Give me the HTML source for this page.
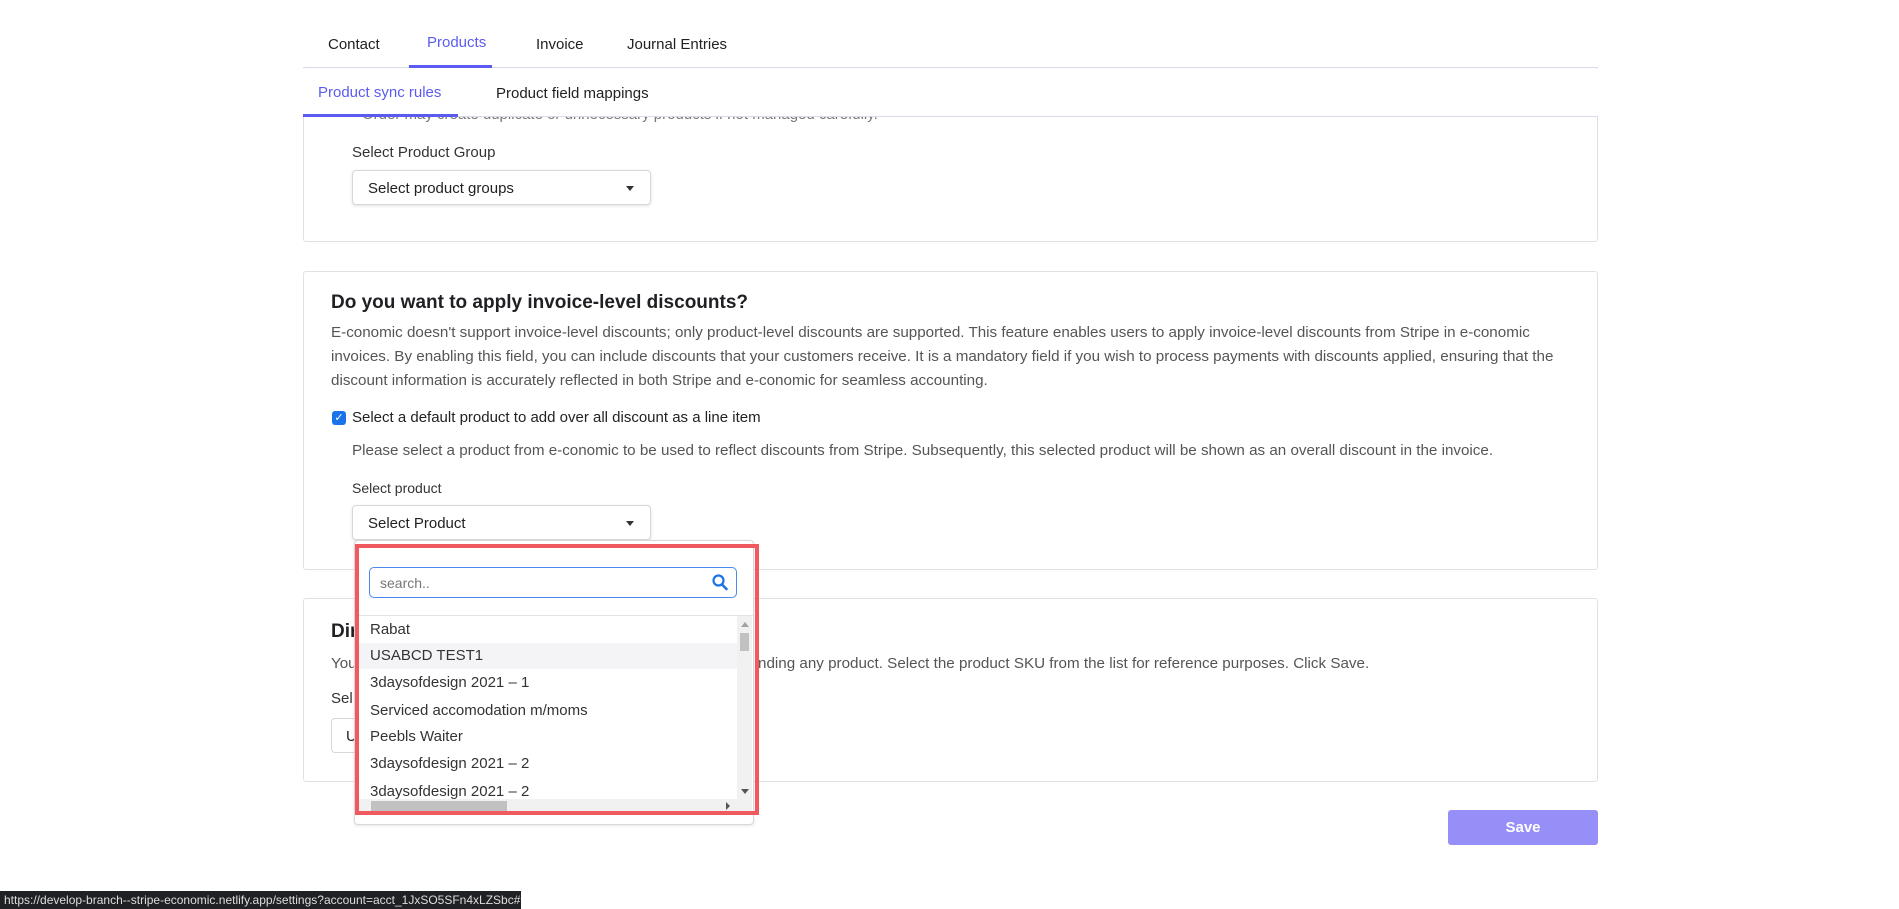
<!DOCTYPE html>
<html><head><meta charset="utf-8"><style>
*{box-sizing:border-box;margin:0;padding:0}
body{width:1899px;height:909px;overflow:hidden;background:#fff;font-family:"Liberation Sans",sans-serif;color:#222;position:relative}
.a{position:absolute;white-space:nowrap}
.card{position:absolute;left:303px;width:1295px;border:1px solid #dfe1e6;border-radius:3px;background:#fff}
.sel{position:absolute;left:352px;width:299px;height:35px;border:1px solid #d6d8dc;border-radius:4px;box-shadow:0 1px 3px rgba(0,0,0,.12);font-size:15px;padding:9px 15px;color:#222;background:#fff}
.sel:after{content:"";position:absolute;right:16px;top:15px;border-left:4px solid transparent;border-right:4px solid transparent;border-top:5px solid #333}
.p{font-size:15.2px;color:#555}
.it{position:absolute;left:370px;font-size:15px;color:#333}
</style></head><body>
<div class="a" style="left:328px;top:36px;font-size:15px">Contact</div>
<div class="a" style="left:427px;top:34px;font-size:15px;color:#5b5bf2">Products</div>
<div class="a" style="left:536px;top:36px;font-size:15px">Invoice</div>
<div class="a" style="left:627px;top:36px;font-size:15px">Journal Entries</div>

<div class="card" style="top:68px;height:174px;border-top:none"></div>
<div class="a" style="left:303px;top:67px;width:1295px;height:1px;background:#d9dbe8"></div>
<div class="a" style="left:409px;top:65px;width:83px;height:3px;background:#5b5bf2"></div>
<div class="a" style="left:362px;top:106px;font-size:15px;color:#777">Order may create duplicate or unnecessary products if not managed carefully.</div>
<div class="a" style="left:303px;top:69px;width:1296px;height:47px;background:#fff"></div>
<div class="a" style="left:318px;top:84px;font-size:15px;color:#5b5bf2">Product sync rules</div>
<div class="a" style="left:496px;top:85px;font-size:15px">Product field mappings</div>
<div class="a" style="left:303px;top:116px;width:1295px;height:1px;background:#d9dbe8"></div>
<div class="a" style="left:303px;top:114px;width:155px;height:3px;background:#5b5bf2"></div>
<div class="a" style="left:352px;top:144px;font-size:15px;color:#333">Select Product Group</div>
<div class="sel" style="top:170px">Select product groups</div>

<div class="card" style="top:271px;height:299px"></div>
<div class="a" style="left:331px;top:292px;font-size:19px;font-weight:bold;color:#1f2024">Do you want to apply invoice-level discounts?</div>
<div class="a p" style="left:331px;top:324px">E-conomic doesn't support invoice-level discounts; only product-level discounts are supported. This feature enables users to apply invoice-level discounts from Stripe in e-conomic</div>
<div class="a p" style="left:331px;top:348px">invoices. By enabling this field, you can include discounts that your customers receive. It is a mandatory field if you wish to process payments with discounts applied, ensuring that the</div>
<div class="a p" style="left:331px;top:372px">discount information is accurately reflected in both Stripe and e-conomic for seamless accounting.</div>
<div class="a" style="left:332px;top:411px;width:14px;height:14px;border-radius:3px;background:#1a73e8;color:#fff;font-size:11px;line-height:14px;text-align:center">✓</div>
<div class="a" style="left:352px;top:409px;font-size:15px;color:#222">Select a default product to add over all discount as a line item</div>
<div class="a p" style="left:352px;top:442px">Please select a product from e-conomic to be used to reflect discounts from Stripe. Subsequently, this selected product will be shown as an overall discount in the invoice.</div>
<div class="a" style="left:352px;top:480px;font-size:14px;color:#333">Select product</div>
<div class="sel" style="top:505px">Select Product</div>

<div class="card" style="top:598px;height:184px"></div>
<div class="a" style="left:331px;top:621px;font-size:19px;font-weight:bold;color:#1f2024">Dir</div>
<div class="a p" style="left:331px;top:655px">You</div>
<div class="a p" style="left:758px;top:655px">nding any product. Select the product SKU from the list for reference purposes. Click Save.</div>
<div class="a" style="left:331px;top:690px;font-size:15px;color:#333">Sel</div>
<div class="a" style="left:331px;top:718px;width:40px;height:35px;border:1px solid #d6d8dc;border-radius:4px;font-size:15px;padding:9px 14px">U</div>

<div class="a" style="left:354px;top:540px;width:400px;height:285px;background:#fff;border:1px solid #d6d8dc;border-radius:4px;box-shadow:0 1px 3px rgba(0,0,0,.1)"></div>
<div class="a" style="left:355px;top:544px;width:404px;height:271px;border:4px solid #f0595e"></div>
<div class="a" style="left:369px;top:567px;width:368px;height:31px;border:1px solid #4a8af0;border-radius:5px;font-size:14px;color:#777;padding:7px 10px">search..</div>
<svg class="a" style="left:712px;top:574px" width="16" height="17" viewBox="0 0 16 17"><circle cx="6.5" cy="6.5" r="5" fill="none" stroke="#1a73e8" stroke-width="2.2"/><path d="M10 10.5l4.5 4.5" stroke="#1a73e8" stroke-width="2.6" stroke-linecap="round"/></svg>
<div class="a" style="left:359px;top:615px;width:394px;height:1px;background:#e3e3e3"></div>
<div class="a" style="left:359px;top:643px;width:378px;height:26px;background:#f4f4f6"></div>
<div class="it" style="top:621px">Rabat</div>
<div class="it" style="top:647px">USABCD TEST1</div>
<div class="it" style="top:674px">3daysofdesign 2021 – 1</div>
<div class="it" style="top:702px">Serviced accomodation m/moms</div>
<div class="it" style="top:728px">Peebls Waiter</div>
<div class="it" style="top:755px">3daysofdesign 2021 – 2</div>
<div class="it" style="top:783px">3daysofdesign 2021 – 2</div>
<div class="a" style="left:737px;top:616px;width:15px;height:183px;background:#f1f1f1"></div>
<div class="a" style="left:740px;top:633px;width:9px;height:18px;background:#c1c1c1"></div>
<div class="a" style="left:741px;top:622px;border-left:4px solid transparent;border-right:4px solid transparent;border-bottom:5px solid #a3a3a3"></div>
<div class="a" style="left:741px;top:789px;border-left:4px solid transparent;border-right:4px solid transparent;border-top:5px solid #555"></div>
<div class="a" style="left:359px;top:799px;width:393px;height:12px;background:#f1f1f1"></div>
<div class="a" style="left:371px;top:801px;width:136px;height:10px;background:#c1c1c1"></div>
<div class="a" style="left:726px;top:802px;border-top:4px solid transparent;border-bottom:4px solid transparent;border-left:4px solid #555"></div>

<div class="a" style="left:1448px;top:810px;width:150px;height:35px;background:#968ff8;border-radius:3px;color:#fff;font-size:15px;font-weight:bold;text-align:center;line-height:35px">Save</div>
<div class="a" style="left:0;top:891px;width:521px;height:18px;background:#202124;color:#ddd;font-size:12px;line-height:18px;padding-left:4px">https://develop-branch--stripe-economic.netlify.app/settings?account=acct_1JxSO5SFn4xLZSbc#</div>
</body></html>
